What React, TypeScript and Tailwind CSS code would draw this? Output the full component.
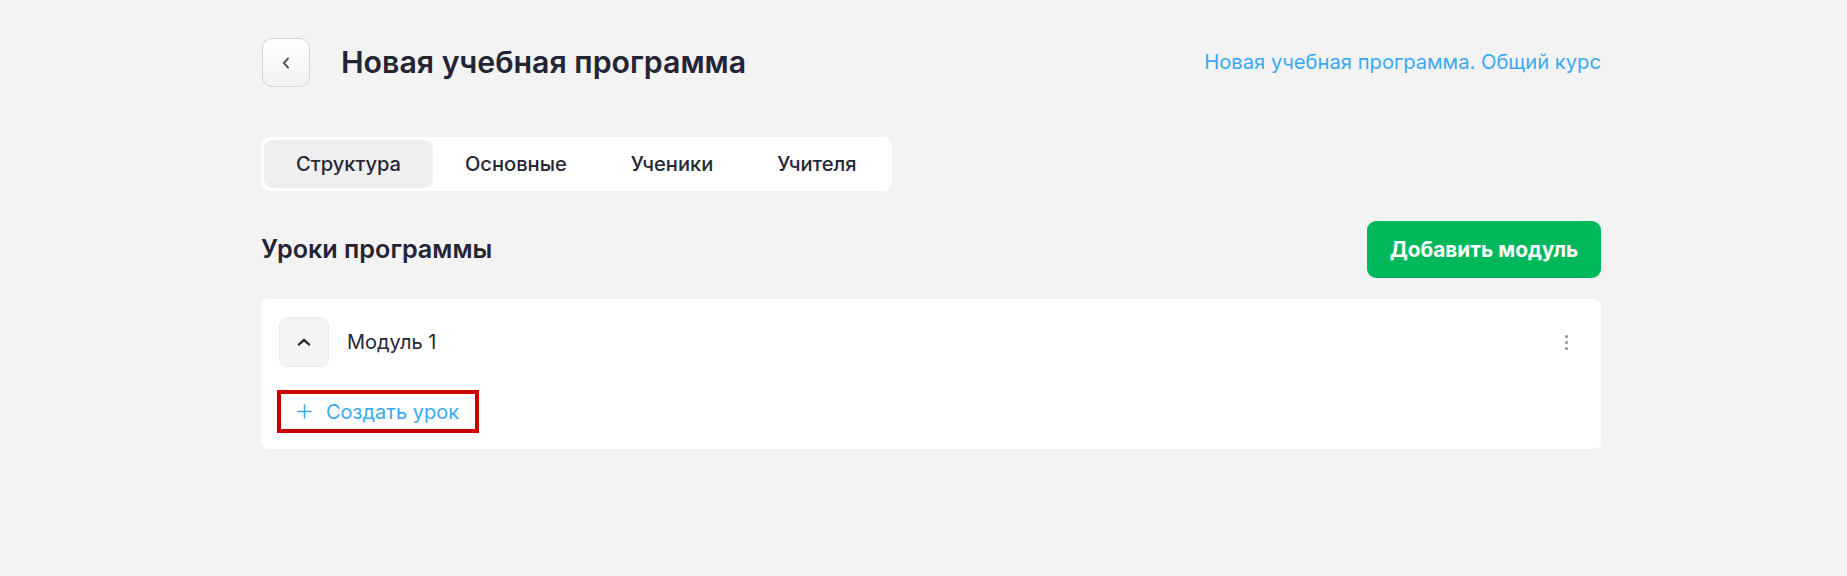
import { FC } from 'react';

const tabs = ['Структура', 'Основные', 'Ученики', 'Учителя'];

const App: FC = () => {
  return (
    <div className="min-h-[576px] w-full bg-[#f3f3f3] font-['Inter',sans-serif] text-[#262837]">
      <div className="ml-[261px] w-[1340px] pt-[38px]">
        {/* Header */}
        <div className="flex items-center justify-between">
          <div className="flex items-center gap-[31px]">
            <button className="ml-[1px] flex h-[49px] w-[48px] items-center justify-center rounded-[10px] border border-[#d4d4d4] bg-gradient-to-b from-white to-[#f2f2f2] text-[#555a6a]">
              <svg width="10" height="12" viewBox="0 0 10 12" fill="none" stroke="currentColor" strokeWidth="2" strokeLinecap="round" strokeLinejoin="round">
                <path d="M7 1.5L2.8 6L7 10.5" />
              </svg>
            </button>
            <h1 className="text-[30.3px] font-semibold text-[#232536]">Новая учебная программа</h1>
          </div>
          <a className="text-[20.2px] text-[#3aa9f4]">Новая учебная программа. Общий курс</a>
        </div>

        {/* Tabs */}
        <div className="mt-[50px] inline-flex rounded-[9px] bg-white p-[3px]">
          {tabs.map((t, i) => (
            <div
              key={t}
              className={`flex h-[48px] items-center rounded-[9px] px-[32px] text-[20.1px] font-medium text-[#262837] ${
                i === 0 ? 'bg-[#efefef]' : ''
              }`}
            >
              {t}
            </div>
          ))}
        </div>

        {/* Section header */}
        <div className="mt-[30px] flex items-center justify-between">
          <h2 className="text-[25.2px] font-semibold text-[#232536]">Уроки программы</h2>
          <button className="flex h-[57px] w-[234px] items-center justify-center rounded-[9px] bg-[#00b85c] text-[20.8px] font-bold text-white">
            Добавить модуль
          </button>
        </div>

        {/* Module card */}
        <div className="mt-[21px] rounded-[7px] bg-white pb-[16px] pl-[16px] pr-[33px] pt-[18px]">
          <div className="flex items-center justify-between pl-[2px]">
            <div className="flex items-center gap-[18px]">
              <button className="flex h-[50px] w-[50px] items-center justify-center rounded-[9px] border border-[#ececec] bg-[#f4f4f4] text-[#232536]">
                <svg width="14" height="8" viewBox="0 0 14 8" fill="none" stroke="currentColor" strokeWidth="2.4" strokeLinecap="round" strokeLinejoin="round">
                  <path d="M2 6.5L7 1.8L12 6.5" />
                </svg>
              </button>
              <span className="text-[20px] text-[#262837]">Модуль 1</span>
            </div>
            <div className="flex flex-col gap-[3px]">
              <span className="h-[3px] w-[3px] rounded-full bg-[#8e8e96]" />
              <span className="h-[3px] w-[3px] rounded-full bg-[#8e8e96]" />
              <span className="h-[3px] w-[3px] rounded-full bg-[#8e8e96]" />
            </div>
          </div>
          <button className="mt-[23px] flex h-[43px] items-center gap-[14px] border-[4px] border-[#cc0000] pl-[16px] pr-[16px] text-[20px] text-[#3aa9f4]">
            <svg width="15" height="15" viewBox="0 0 16 16" fill="none" stroke="currentColor" strokeWidth="1.6" strokeLinecap="round">
              <path d="M8 1v14M1 8h14" />
            </svg>
            <span>Создать урок</span>
          </button>
        </div>
      </div>
    </div>
  );
};

export default App;
